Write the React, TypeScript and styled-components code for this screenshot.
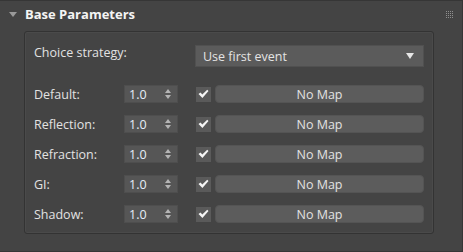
import React from 'react';
import styled, { createGlobalStyle } from 'styled-components';

const GlobalStyle = createGlobalStyle`
  html, body {
    margin: 0;
    padding: 0;
    background: #444444;
  }
  body {
    font-family: 'Open Sans', 'Liberation Sans', sans-serif;
  }
`;

const Panel = styled.div`
  box-sizing: border-box;
  width: 463px;
  height: 252px;
  background: #444444;
  border-top: 1px solid #363636;
  border-right: 1px solid #363636;
  border-bottom: 1px solid #363636;
  display: flex;
  flex-direction: column;
`;

const Header = styled.div`
  height: 30px;
  display: flex;
  align-items: center;
  padding: 0 9px 4px 9px;
  box-sizing: border-box;
`;

const Caret = styled.span`
  width: 0;
  height: 0;
  border-left: 4px solid transparent;
  border-right: 4px solid transparent;
  border-top: 5px solid #9a9a9a;
  margin-right: 8px;
`;

const Title = styled.span`
  flex: 1;
  font-weight: bold;
  font-size: 13px;
  color: #f4f4f4;
`;

const Grip = styled.div`
  display: grid;
  grid-template-columns: repeat(4, 1px);
  grid-auto-rows: 1px;
  gap: 1px;

  span {
    background: #8f8f8f;
  }
`;

const Group = styled.div`
  box-sizing: border-box;
  margin-left: 24px;
  width: 410px;
  height: 203px;
  border: 1px solid #333333;
  border-radius: 3px;
  box-shadow: inset 0 0 0 1px #4a4a4a;
  padding: 13px 9px 9px 9px;
  display: flex;
  flex-direction: column;
  gap: 12px;
`;

const Row = styled.div<{ $first?: boolean }>`
  display: flex;
  align-items: center;
  height: ${(p) => (p.$first ? '22px' : '18px')};
  margin-bottom: ${(p) => (p.$first ? '6px' : '0')};
`;

const Label = styled.span<{ $wide?: boolean }>`
  width: ${(p) => (p.$wide ? '161px' : '90px')};
  flex-shrink: 0;
  font-size: 12.5px;
  color: #e2e2e2;
  margin-top: ${(p) => (p.$wide ? '-7px' : '0')};
`;

const Dropdown = styled.div`
  flex: 1;
  height: 22px;
  background: #5b5b5b;
  border: 1px solid #505050;
  box-sizing: border-box;
  display: flex;
  align-items: center;
  padding: 0 9px 0 7px;
  font-size: 12.5px;
  color: #e4e4e4;
`;

const DropText = styled.span`
  flex: 1;
`;

const DropArrow = styled.span`
  width: 0;
  height: 0;
  border-left: 4px solid transparent;
  border-right: 4px solid transparent;
  border-top: 6px solid #e6e6e6;
`;

const Spinner = styled.div`
  box-sizing: border-box;
  width: 54px;
  height: 18px;
  background: #565656;
  border: 1px solid #4e4e4e;
  display: flex;
  align-items: center;
  padding: 0 5px 0 4px;
  font-size: 12.5px;
  color: #e6eef6;
`;

const SpinValue = styled.span`
  flex: 1;
`;

const Arrows = styled.div`
  display: flex;
  flex-direction: column;
  gap: 2px;
  margin-right: 1px;
`;

const Arrow = styled.span<{ $down?: boolean }>`
  width: 0;
  height: 0;
  border-left: 3px solid transparent;
  border-right: 3px solid transparent;
  ${(p) =>
    p.$down ? 'border-top: 4px solid #b4b4b4;' : 'border-bottom: 4px solid #b4b4b4;'}
`;

const Check = styled.div`
  box-sizing: border-box;
  width: 15px;
  height: 15px;
  margin-left: 18px;
  margin-right: 4px;
  background: #5a5a5a;
  display: flex;
  align-items: center;
  justify-content: center;
`;

const MapButton = styled.div`
  flex: 1;
  height: 18px;
  box-sizing: border-box;
  border-radius: 4px;
  background: #5c5c5c;
  border: 1px solid #545454;
  display: flex;
  align-items: center;
  justify-content: center;
  font-size: 12.5px;
  color: #e2e2e2;
`;

const CheckMark = () => (
  <svg width="11" height="10" viewBox="0 0 11 10">
    <path d="M0.5 5 L2.5 3.5 L4.3 5.6 L9.2 0.8 L10.5 2 L4.4 9 Z" fill="#f4f4f4" />
  </svg>
);

const rows = ['Default:', 'Reflection:', 'Refraction:', 'GI:', 'Shadow:'];

export default function App() {
  return (
    <>
      <GlobalStyle />
      <Panel>
        <Header>
          <Caret />
          <Title>Base Parameters</Title>
          <Grip>
            {Array.from({ length: 16 }).map((_, i) => (
              <span key={i} />
            ))}
          </Grip>
        </Header>
        <Group>
          <Row $first>
            <Label $wide>Choice strategy:</Label>
            <Dropdown>
              <DropText>Use first event</DropText>
              <DropArrow />
            </Dropdown>
          </Row>
          {rows.map((name) => (
            <Row key={name}>
              <Label>{name}</Label>
              <Spinner>
                <SpinValue>1.0</SpinValue>
                <Arrows>
                  <Arrow />
                  <Arrow $down />
                </Arrows>
              </Spinner>
              <Check>
                <CheckMark />
              </Check>
              <MapButton>No Map</MapButton>
            </Row>
          ))}
        </Group>
      </Panel>
    </>
  );
}
